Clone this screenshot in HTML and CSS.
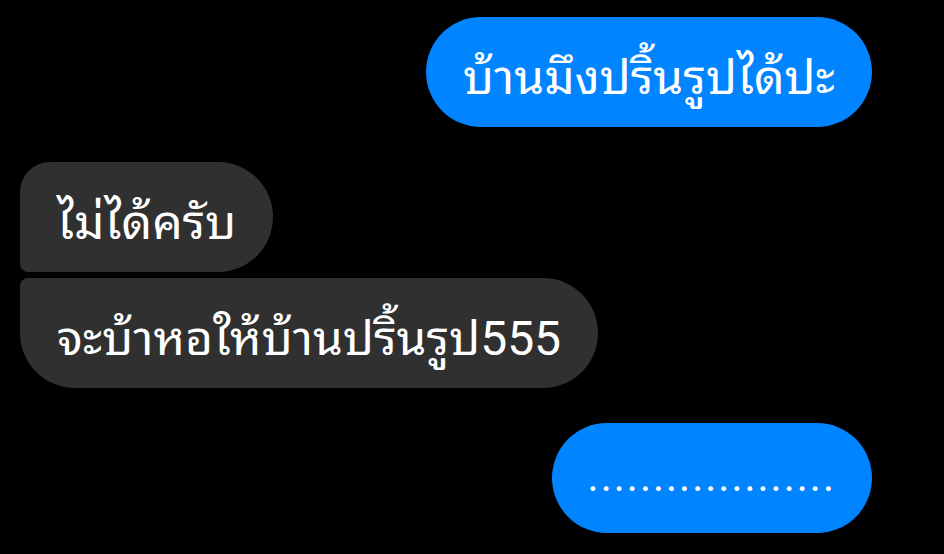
FILE: index.html
```html
<!DOCTYPE html>
<html lang="th">
<head>
<meta charset="utf-8">
<link rel="stylesheet" href="styles.css">
</head>
<body>
<div class="chat">
  <div class="row out"><div class="bubble blue">บ้านมึงปริ้นรูปได้ปะ</div></div>
  <div class="group">
    <div class="row in"><div class="bubble gray first">ไม่ได้ครับ</div></div>
    <div class="row in"><div class="bubble gray last">จะบ้าหอให้บ้านปริ้นรูป555</div></div>
  </div>
  <div class="row out"><div class="bubble blue dots">...................</div></div>
</div>
</body>
</html>
```
FILE: styles.css
```css
html, body {
  margin: 0;
  padding: 0;
  background: #000;
}
body {
  width: 944px;
  height: 554px;
  overflow: hidden;
  font-family: Roboto, "Noto Sans Thai Looped", sans-serif;
  color: #fff;
}
.chat {
  display: flex;
  flex-direction: column;
  gap: 35px;
  padding: 17px 72px 0 20px;
}
.group {
  display: flex;
  flex-direction: column;
  gap: 6px;
}
.row {
  display: flex;
}
.row.out { justify-content: flex-end; }
.row.in { justify-content: flex-start; }
.bubble {
  height: 110px;
  box-sizing: border-box;
  display: flex;
  align-items: center;
  padding: 0 37px;
  font-size: 48px;
  white-space: nowrap;
  border-radius: 55px;
}
.blue { background: #0084ff; }
.gray { background: #303030; }
.gray.first { border-radius: 30px 55px 55px 8px; }
.gray.last { border-radius: 8px 55px 55px 55px; }
.dots {
  padding: 0 36px 4px;
  font-size: 42px;
  letter-spacing: 2px;
}
```
